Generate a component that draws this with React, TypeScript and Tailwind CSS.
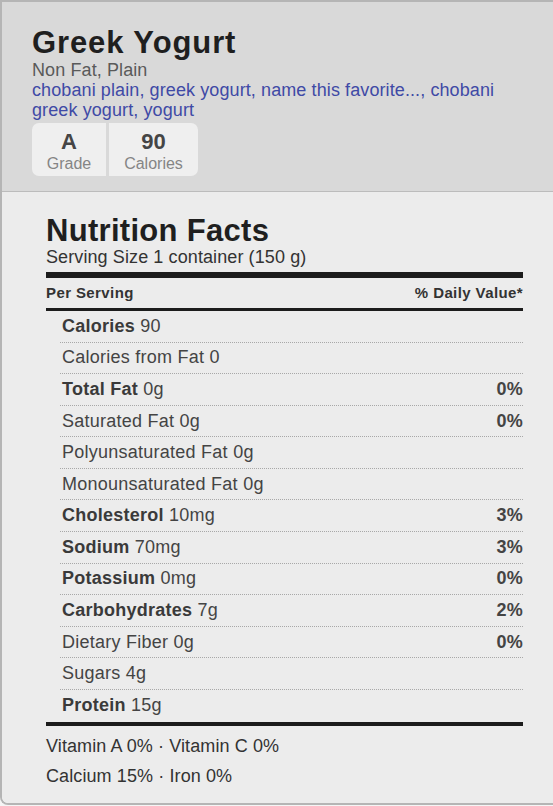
import React from 'react';

interface NutrientRow {
  label: string;
  value: string;
  bold?: boolean;
  daily?: string;
}

const rows: NutrientRow[] = [
  { label: 'Calories', value: '90', bold: true },
  { label: 'Calories from Fat', value: '0' },
  { label: 'Total Fat', value: '0g', bold: true, daily: '0%' },
  { label: 'Saturated Fat', value: '0g', daily: '0%' },
  { label: 'Polyunsaturated Fat', value: '0g' },
  { label: 'Monounsaturated Fat', value: '0g' },
  { label: 'Cholesterol', value: '10mg', bold: true, daily: '3%' },
  { label: 'Sodium', value: '70mg', bold: true, daily: '3%' },
  { label: 'Potassium', value: '0mg', bold: true, daily: '0%' },
  { label: 'Carbohydrates', value: '7g', bold: true, daily: '2%' },
  { label: 'Dietary Fiber', value: '0g', daily: '0%' },
  { label: 'Sugars', value: '4g' },
  { label: 'Protein', value: '15g', bold: true },
];

const tags = 'chobani plain, greek yogurt, name this favorite..., chobani greek yogurt, yogurt';

export default function App() {
  return (
    <div
      className="w-[553px] h-[806px] overflow-hidden bg-[#f5f5f5]"
      style={{ fontFamily: '"Liberation Sans", Arial, sans-serif' }}
    >
      <div className="w-[570px] border-t-2 border-l-2 border-b-2 border-[#b5b5b5] rounded-bl-[8px] overflow-hidden">
        {/* Header */}
        <div className="bg-[#d9d9d9] pl-[30px] pr-[40px] pt-[24px] pb-[15px] border-b border-[#bcbcbc]">
          <h1 className="text-[31px] leading-[34px] font-bold tracking-[0.9px] text-[#1f1f1f]">Greek Yogurt</h1>
          <div className="text-[18px] leading-[20px] tracking-[0.1px] text-[#5a5a5a]">Non Fat, Plain</div>
          <div className="text-[18px] leading-[20px] tracking-[0.1px] text-[#3f4aa6] w-[490px]">{tags}</div>
          <div className="flex gap-[3px] mt-[3px]">
            <div className="w-[74px] h-[53px] bg-[#efefef] rounded-l-[7px] flex flex-col items-center pt-[6px]">
              <span className="text-[22px] leading-[25px] font-bold text-[#454545]">A</span>
              <span className="text-[16px] leading-[18px] mt-[1px] text-[#858585]">Grade</span>
            </div>
            <div className="w-[89px] h-[53px] bg-[#efefef] rounded-r-[7px] flex flex-col items-center pt-[6px]">
              <span className="text-[22px] leading-[25px] font-bold text-[#454545]">90</span>
              <span className="text-[16px] leading-[18px] mt-[1px] text-[#858585]">Calories</span>
            </div>
          </div>
        </div>

        {/* Nutrition facts */}
        <div className="bg-[#ececec] pl-[44px] pr-[47px] pt-[23px] pb-[12px]">
          <h2 className="text-[31px] leading-[32px] font-bold tracking-[0.3px] text-[#1f1f1f]">Nutrition Facts</h2>
          <div className="text-[18px] leading-[20px] tracking-[0.1px] text-[#333]">Serving Size 1 container (150 g)</div>
          <div className="h-[6px] bg-[#1c1c1c] mt-[5px]" />
          <div className="flex justify-between text-[15px] leading-[18px] font-bold tracking-[0.4px] text-[#333] mt-[6px]">
            <span>Per Serving</span>
            <span>% Daily Value*</span>
          </div>
          <div className="h-[3px] bg-[#1c1c1c] mt-[6px]" />

          <div className="ml-[14px]">
            {rows.map((r, i) => (
              <div
                key={r.label}
                className={`h-[31.58px] flex items-center justify-between pl-[2px] text-[18px] tracking-[0.25px] text-[#444] ${
                  i < rows.length - 1 ? 'border-b border-dotted border-[#a8a8a8]' : ''
                }`}
              >
                <span>
                  {r.bold ? <span className="font-bold text-[#3a3a3a]">{r.label}</span> : r.label} {r.value}
                </span>
                {r.daily && <span className="font-bold text-[#444]">{r.daily}</span>}
              </div>
            ))}
          </div>

          <div className="h-[4px] bg-[#1c1c1c]" />
          <div className="pt-[5px] text-[18px] leading-[30px] tracking-[0.1px] text-[#333]">
            <div>Vitamin A 0% · Vitamin C 0%</div>
            <div>Calcium 15% · Iron 0%</div>
          </div>
        </div>
      </div>
    </div>
  );
}
